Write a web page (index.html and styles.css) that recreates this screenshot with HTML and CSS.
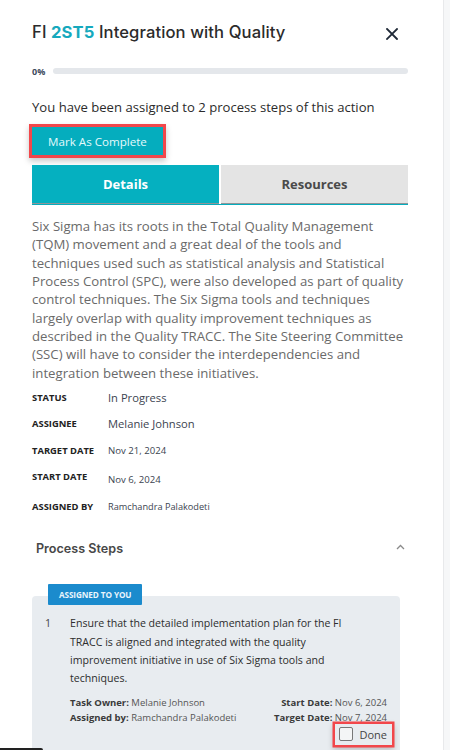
FILE: index.html
```html
<!DOCTYPE html>
<html lang="en">
<head>
<meta charset="utf-8">
<title>FI 2ST5 Integration with Quality</title>
<link rel="stylesheet" href="styles.css">
</head>
<body>
<div class="panel">
  <div class="header">
    <h1 class="title">FI <span class="code">2ST5</span> Integration with Quality</h1>
    <svg class="close" width="12" height="12" viewBox="0 0 12 12"><path d="M1 1L11 11M11 1L1 11" stroke="#1f2937" stroke-width="1.8" stroke-linecap="square"/></svg>
  </div>
  <div class="progress">
    <span class="pct">0%</span>
    <div class="track"></div>
  </div>
  <p class="assigned">You have been assigned to 2 process steps of this action</p>
  <button class="complete">Mark As Complete</button>
  <div class="tabs">
    <div class="tab active">Details</div>
    <div class="tab">Resources</div>
  </div>
  <p class="desc">Six Sigma has its roots in the Total Quality Management (TQM) movement and a great deal of the tools and techniques used such as statistical analysis and Statistical Process Control (SPC), were also developed as part of quality control techniques. The Six Sigma tools and techniques largely overlap with quality improvement techniques as described in the Quality TRACC. The Site Steering Committee (SSC) will have to consider the interdependencies and integration between these initiatives.</p>
  <div class="meta">
    <div class="row"><span class="label">STATUS</span><span class="val big">In Progress</span></div>
    <div class="row"><span class="label">ASSIGNEE</span><span class="val big">Melanie Johnson</span></div>
    <div class="row"><span class="label">TARGET DATE</span><span class="val">Nov 21, 2024</span></div>
    <div class="row start"><span class="label">START DATE</span><span class="val low">Nov 6, 2024</span></div>
    <div class="row by"><span class="label">ASSIGNED BY</span><span class="val small">Ramchandra Palakodeti</span></div>
  </div>
  <div class="steps-head">
    <span class="steps-title">Process Steps</span>
    <svg class="chev" width="9" height="6" viewBox="0 0 9 6"><path d="M1 5L4.5 1.5L8 5" fill="none" stroke="#8a8a8a" stroke-width="1.3"/></svg>
  </div>
  <div class="card">
    <span class="badge">ASSIGNED TO YOU</span>
    <div class="step">
      <span class="num">1</span>
      <p class="step-text">Ensure that the detailed implementation plan for the FI TRACC is aligned and integrated with the quality improvement initiative in use of Six Sigma tools and techniques.</p>
    </div>
    <div class="step-meta">
      <div class="col">
        <div><b>Task Owner:</b> Melanie Johnson</div>
        <div><b>Assigned by:</b> Ramchandra Palakodeti</div>
      </div>
      <div class="col right">
        <div><b>Start Date:</b> Nov 6, 2024</div>
        <div><b>Target Date:</b> Nov 7, 2024</div>
      </div>
    </div>
    <div class="done-row">
      <label class="done"><span class="box"></span>Done</label>
    </div>
  </div>
</div>
<div class="strip"></div>
<div class="toast-edge"></div>
</body>
</html>
```
FILE: styles.css
```css
html, body {
  margin: 0;
  height: 750px;
  overflow: hidden;
}
body {
  display: flex;
  background: #f6f7f8;
  font-family: "Open Sans", "Liberation Sans", sans-serif;
}
.panel {
  width: 376px;
  padding: 0 35px 0 32px;
  background: #fff;
  border-right: 1px solid #e8e9eb;
  height: 750px;
  overflow: hidden;
  flex: none;
}
.strip { flex: 1; }
.header {
  display: flex;
  align-items: center;
  justify-content: space-between;
  padding-top: 20px;
}
.title {
  margin: 0;
  font-family: Inter, "Noto Sans", sans-serif;
  font-weight: 500;
  font-size: 16.6px;
  line-height: 24px;
  color: #2b2b2b;
  letter-spacing: 0.1px;
}
.code { color: #16a9bd; font-weight: 700; }
.close { margin-right: 10px; margin-top: 4px; }
.progress {
  display: flex;
  align-items: center;
  gap: 8px;
  margin-top: 21px;
  height: 12px;
}
.pct {
  font-size: 9px;
  font-weight: 700;
  color: #3d4a5c;
}
.track {
  flex: 1;
  height: 6px;
  border-radius: 3px;
  background: #e4e7eb;
}
.assigned {
  margin: 20px 0 0;
  font-size: 13.1px;
  line-height: 20px;
  color: #2b2b2b;
}
.complete {
  display: block;
  margin-top: 10px;
  width: 131px;
  height: 28px;
  border: 0;
  padding: 0;
  background: #05adbe;
  color: #e6fafc;
  font-family: "Open Sans", sans-serif;
  font-size: 11.6px;
  box-shadow: 0 0 0 3px #f2474b, 0 3px 6px 3px rgba(0,0,0,0.22);
}
.tabs {
  display: flex;
  gap: 2px;
  margin-top: 10px;
  border-bottom: 1px solid #05adbe;
}
.tab {
  flex: 1;
  height: 38px;
  display: flex;
  align-items: center;
  justify-content: center;
  background: #e4e4e4;
  font-weight: 700;
  font-size: 13px;
  color: #4a4a4a;
  border-bottom: 1px solid #8f9598;
}
.tab.active { background: #05b0c0; color: #fff; }
.desc {
  margin: 12px 0 0;
  font-size: 13.2px;
  line-height: 18.33px;
  color: #6a6a6a;
}
.meta {
  margin-top: 2px;
  display: flex;
  flex-direction: column;
}
.row {
  display: flex;
  align-items: center;
  height: 26.6px;
}
.label {
  width: 76px;
  flex: none;
  font-size: 9.4px;
  font-weight: 700;
  color: #222;
}
.val { font-size: 9.6px; color: #3b4450; }
.val.big { font-size: 11.2px; }
.val.small { font-size: 9.2px; }
.row.start { height: 25px; }
.val.low { margin-top: 6px; }
.row.by { margin-top: 4px; }
.steps-head {
  display: flex;
  justify-content: space-between;
  align-items: center;
  margin-top: 22px;
  padding: 0 3px 0 4px;
}
.steps-title {
  font-family: Inter, "Noto Sans", sans-serif;
  font-weight: 600;
  font-size: 12.6px;
  color: #474747;
}
.chev { margin-bottom: 4px; }
.card {
  position: relative;
  margin-top: 40px;
  width: 368px;
  background: #e8ecf0;
  border-radius: 4px;
  padding: 18px 0 20px;
}
.badge {
  position: absolute;
  top: -12px;
  left: 16px;
  background: #1b8bcd;
  color: #eaf5fc;
  font-size: 8.2px;
  font-weight: 700;
  letter-spacing: -0.1px;
  height: 21px;
  line-height: 21px;
  padding: 0 11px;
  border-radius: 1px;
}
.step { display: flex; padding-left: 13px; }
.num {
  width: 25px;
  flex: none;
  font-size: 10.6px;
  line-height: 18.33px;
  color: #444;
}
.step-text {
  margin: 0;
  width: 305px;
  font-size: 10.6px;
  line-height: 18.33px;
  color: #2d2d2d;
}
.step-meta {
  display: flex;
  justify-content: space-between;
  padding: 0 13px 0 38px;
  margin-top: 7px;
  font-size: 9.5px;
  line-height: 15.5px;
  color: #555;
}
.step-meta b { color: #3a3a3a; }
.col.right { text-align: right; }
.done-row {
  display: flex;
  justify-content: flex-end;
  padding-right: 8px;
  margin-top: -2px;
}
.done {
  display: flex;
  align-items: center;
  gap: 6px;
  height: 21px;
  padding: 0 5px 0 4px;
  font-size: 11px;
  color: #444;
  box-shadow: 0 0 0 2.5px #f2474b, 0 3px 6px 2px rgba(0,0,0,0.2);
}
.box {
  width: 12px;
  height: 12px;
  border: 1px solid #777;
  border-radius: 2px;
  background: #f4f5f6;
}
.toast-edge {
  position: fixed;
  left: 0;
  bottom: 0;
  width: 43px;
  height: 2px;
  background: #222;
  border-top-right-radius: 2px;
}
```
